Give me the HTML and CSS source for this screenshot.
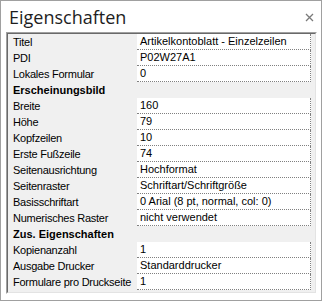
FILE: index.html
```html
<!DOCTYPE html>
<html lang="de">
<head>
    <meta charset="UTF-8">
    <title>Eigenschaften</title>
    <link rel="stylesheet" href="styles.css">
</head>
<body>
    <div class="panel">
        <!-- Title bar -->
        <div class="panel-head">
            <span class="panel-title">Eigenschaften</span>
            <svg class="close" width="9" height="9" viewBox="0 0 9 9">
                <path d="M1 1 L8 8 M8 1 L1 8" stroke="#7a7a7a" stroke-width="1.3" fill="none"/>
            </svg>
        </div>

        <!-- Property grid -->
        <div class="grid-frame">
            <div class="grid">
                <div class="row"><div class="label">Titel</div><div class="value">Artikelkontoblatt - Einzelzeilen</div></div>
                <div class="row"><div class="label">PDI</div><div class="value">P02W27A1</div></div>
                <div class="row"><div class="label">Lokales Formular</div><div class="value">0</div></div>
                <div class="row group">Erscheinungsbild</div>
                <div class="row"><div class="label">Breite</div><div class="value">160</div></div>
                <div class="row"><div class="label">Höhe</div><div class="value">79</div></div>
                <div class="row"><div class="label">Kopfzeilen</div><div class="value">10</div></div>
                <div class="row"><div class="label">Erste Fußzeile</div><div class="value">74</div></div>
                <div class="row"><div class="label">Seitenausrichtung</div><div class="value">Hochformat</div></div>
                <div class="row"><div class="label">Seitenraster</div><div class="value">Schriftart/Schriftgröße</div></div>
                <div class="row"><div class="label">Basisschriftart</div><div class="value">0 Arial (8 pt, normal, col: 0)</div></div>
                <div class="row"><div class="label">Numerisches Raster</div><div class="value">nicht verwendet</div></div>
                <div class="row group">Zus. Eigenschaften</div>
                <div class="row"><div class="label">Kopienanzahl</div><div class="value">1</div></div>
                <div class="row"><div class="label">Ausgabe Drucker</div><div class="value">Standarddrucker</div></div>
                <div class="row"><div class="label">Formulare pro Druckseite</div><div class="value">1</div></div>
            </div>
        </div>
    </div>
</body>
</html>
```

FILE: styles.css
```css
body {
    margin: 0;
    background-color: #ffffff;
    font-family: 'Liberation Sans', Arial, sans-serif;
    color: #000000;
}

/* Outer window */
.panel {
    width: 322px;
    height: 301px;
    box-sizing: border-box;
    border: 1px solid #a0a0a0;
    background-color: #ffffff;
    display: flex;
    flex-direction: column;
}

.panel-head {
    height: 31px;
    display: flex;
    align-items: center;
    justify-content: space-between;
    padding: 0 7px 0 8px;
}

.panel-title {
    font-family: 'Open Sans', sans-serif;
    font-size: 18px;
    color: #1e1e1e;
    margin-top: 1px;
}

.close {
    margin-top: 2px;
}

/* Sunken frame around the grid */
.grid-frame {
    margin: 0 4px 0 5px;
    border: 1px solid;
    border-color: #a0a0a0 #ffffff #ffffff #a0a0a0;
}

.grid {
    border: 1px solid;
    border-color: #696969 #e3e3e3 #e3e3e3 #696969;
    background-color: #f0f0f0;
    padding-right: 4px;
    padding-bottom: 2px;
}

.row {
    display: grid;
    grid-template-columns: 129px 1fr;
    height: 16px;
    font-size: 11px;
    line-height: 16px;
}

.row .label {
    padding-left: 5px;
    letter-spacing: -0.25px;
    white-space: nowrap;
}

.row .value {
    background-color: #ffffff;
    padding-left: 3px;
    border-bottom: 1px dotted #808080;
    border-right: 1px dotted #808080;
    line-height: 15px;
    white-space: nowrap;
    overflow: hidden;
}

.row.group {
    display: block;
    font-weight: bold;
    padding-left: 5px;
}
```
